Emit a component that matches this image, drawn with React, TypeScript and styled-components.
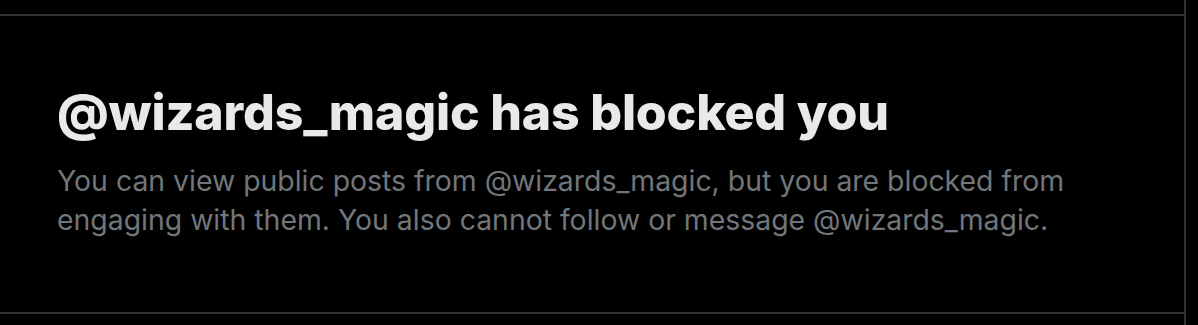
import React from "react";
import styled, { createGlobalStyle } from "styled-components";

const Global = createGlobalStyle`
  html, body { margin: 0; padding: 0; background: #000; }
  body { font-family: Inter, "Noto Sans", sans-serif; -webkit-font-smoothing: antialiased; }
`;

const Column = styled.div`
  width: 1184px;
  height: 325px;
  border-right: 2px solid #2f3336;
  display: flex;
  flex-direction: column;
`;

const Spacer = styled.div`
  height: 14px;
  flex: none;
`;

const Panel = styled.section`
  height: 300px;
  box-sizing: border-box;
  flex: none;
  border-top: 2px solid #2f3336;
  border-bottom: 2px solid #2f3336;
  padding: 66px 0 0 57px;
  display: flex;
  flex-direction: column;
`;

const Title = styled.h1`
  margin: 0;
  font-family: Inter, sans-serif;
  font-weight: 800;
  font-size: 50px;
  line-height: 60px;
  color: #e7e9ea;
  letter-spacing: -0.2px;
  white-space: nowrap;
`;

const Body = styled.p`
  margin: 19px 0 0;
  font-family: Inter, sans-serif;
  font-weight: 400;
  font-size: 28.4px;
  line-height: 39px;
  color: #71767b;
  max-width: 1060px;
`;

export default function App() {
  return (
    <>
      <Global />
      <Column>
        <Spacer />
        <Panel>
          <Title>@wizards_magic has blocked you</Title>
          <Body>
            You can view public posts from @wizards_magic, but you are blocked from
            engaging with them. You also cannot follow or message @wizards_magic.
          </Body>
        </Panel>
      </Column>
    </>
  );
}
